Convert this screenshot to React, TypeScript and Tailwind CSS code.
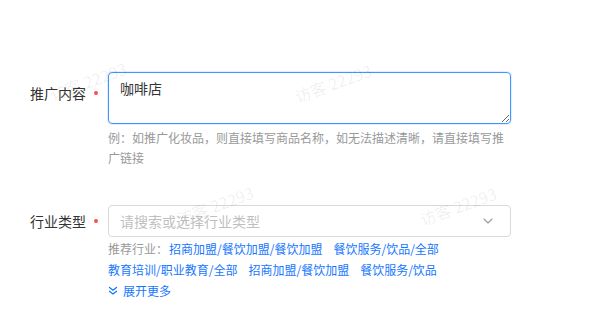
import { ChevronDown } from 'lucide-react'

const font = { fontFamily: '"Noto Sans CJK SC", "Noto Sans", sans-serif' }

const links1 = ['招商加盟/餐饮加盟/餐饮加盟', '餐饮服务/饮品/全部']
const links2 = ['教育培训/职业教育/全部', '招商加盟/餐饮加盟', '餐饮服务/饮品']

const marks = [
  { x: 88, y: 81 },
  { x: 333, y: 83 },
  { x: 215, y: 205 },
  { x: 458, y: 206 },
]

function Label({ text }: { text: string }) {
  return (
    <div className="w-[108px] shrink-0 flex items-center justify-end h-[20px] text-[14px] text-[#333]">
      <span>{text}</span>
      <span className="ml-[8px] mr-[10px] w-[4px] h-[4px] rounded-full bg-[#ff4d4f]" />
    </div>
  )
}

export default function App() {
  return (
    <div className="relative w-[605px] h-[325px] overflow-hidden bg-white" style={font}>
      <div className="pt-[72px] flex flex-col">
        <div className="flex">
          <div className="pt-[11px]">
            <Label text="推广内容" />
          </div>
          <div className="w-[403px] flex flex-col">
            <textarea
              defaultValue="咖啡店"
              className="w-[403px] h-[52px] border border-[#4096ff] rounded-[4px] px-[11px] py-[4px] text-[14px] leading-[22px] text-[#333] outline-none shadow-[0_0_0_1px_rgba(64,150,255,0.15)]"
            />
            <p className="mt-[4px] text-[12px] leading-[20px] text-[#999]">
              例：如推广化妆品，则直接填写商品名称，如无法描述清晰，请直接填写推广链接
            </p>
          </div>
        </div>

        <div className="flex mt-[37px]">
          <div className="pt-[6px]">
            <Label text="行业类型" />
          </div>
          <div className="w-[403px] flex flex-col">
            <div className="h-[32px] border border-[#d9d9d9] rounded-[4px] pl-[11px] pr-[14px] flex items-center justify-between">
              <span className="text-[14px] text-[#bfbfbf]">请搜索或选择行业类型</span>
              <ChevronDown size={16} strokeWidth={1.6} className="text-[#999]" />
            </div>
            <div className="mt-[1px] flex flex-wrap gap-x-[11px] text-[12px] leading-[21px]">
              <span className="text-[#999] -mr-[10px]">推荐行业：</span>
              {links1.map(l => (
                <span key={l} className="text-[#1677ff]">{l}</span>
              ))}
              {links2.map(l => (
                <span key={l} className="text-[#1677ff]">{l}</span>
              ))}
            </div>
            <div className="flex items-center gap-[5px] text-[12px] leading-[21px] text-[#1677ff]">
              <svg width="10" height="10" viewBox="0 0 10 10" fill="none" stroke="currentColor" strokeWidth="1.3" strokeLinecap="round" strokeLinejoin="round" className="ml-[0px]">
                <path d="M1.5 1.5 L5 4.2 L8.5 1.5 M1.5 5.3 L5 8 L8.5 5.3" />
              </svg>
              <span>展开更多</span>
            </div>
          </div>
        </div>
      </div>

      {marks.map((m, i) => (
        <div key={i} className="absolute pointer-events-none" style={{ left: m.x, top: m.y }}>
          <span className="block whitespace-nowrap -translate-x-1/2 -translate-y-1/2 -rotate-[20deg] text-[16px] text-black/[0.07]">
            访客 22293
          </span>
        </div>
      ))}
    </div>
  )
}
